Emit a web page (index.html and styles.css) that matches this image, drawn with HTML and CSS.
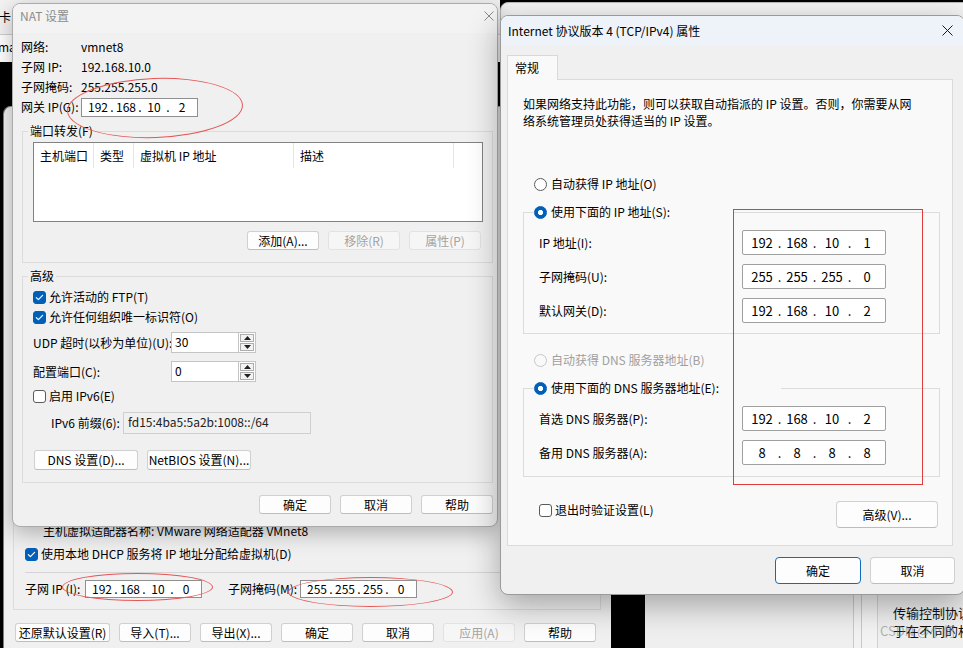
FILE: index.html
```html
<!DOCTYPE html>
<html lang="zh-CN">
<head>
<meta charset="utf-8">
<title>NAT 设置</title>
<link rel="stylesheet" href="styles.css">
</head>
<body>
<div class="desk">
  <div class="win back-top">
    <div class="bt-title">卡</div>
    <div class="bt-body">ma</div>
  </div>

  <div class="win vne">
    <div class="vne-group">
      <div class="vne-adapter">主机虚拟适配器名称: VMware 网络适配器 VMnet8</div>
      <div class="row-check vne-dhcp"><span class="cb on"><svg width="11" height="11" viewBox="0 0 11 11"><path d="M2.3 5.6 L4.4 7.6 L8.6 3.3" fill="none" stroke="#fff" stroke-width="1.2" stroke-linecap="round" stroke-linejoin="round"/></svg></span><span>使用本地 DHCP 服务将 IP 地址分配给虚拟机(D)</span></div>
      <div class="vne-sep"></div>
      <div class="vne-subnet">
        <span class="vne-l1">子网 IP (I):</span>
        <div class="ip ip-sm ip-vne"><span>192</span><i>.</i><span>168</span><i>.</i><span>10</span><i>.</i><span>0</span></div>
        <span class="vne-l2">子网掩码(M):</span>
        <div class="ip ip-sm ip-vne"><span>255</span><i>.</i><span>255</span><i>.</i><span>255</span><i>.</i><span>0</span></div>
      </div>
    </div>
    <div class="btn-row vne-buttons">
      <button class="btn w95">还原默认设置(R)</button>
      <button class="btn w72">导入(T)...</button>
      <button class="btn w72">导出(X)...</button>
      <button class="btn w72 extra">确定</button>
      <button class="btn w72">取消</button>
      <button class="btn w72 dis">应用(A)</button>
      <button class="btn w72">帮助</button>
    </div>
  </div>

  <div class="win eth-top"></div>

  <div class="win eth-bottom">
    <div class="eb-space"></div>
    <div class="eb-bar"></div>
    <div class="eb-gap"></div>
    <div class="eb-panel">
      <div>传输控制协议/Internet 协议。该协议是默认的</div>
      <div>于在不同的相互连接的网络上通信。</div>
    </div>
  </div>

  <div class="win nat">
    <div class="titlebar nat-title">
      <span>NAT 设置</span>
      <svg class="xicon" width="10" height="10" viewBox="0 0 10 10"><path d="M0.5 0.5 L9.5 9.5 M9.5 0.5 L0.5 9.5" stroke="#8a8a8a" stroke-width="1"/></svg>
    </div>
    <div class="nat-body">
      <div class="nat-info">
        <span>网络:</span><span>vmnet8</span>
        <span>子网 IP:</span><span>192.168.10.0</span>
        <span>子网掩码:</span><span>255.255.255.0</span>
        <span>网关 IP(G):</span>
        <div class="ip ip-sm ip-gw"><span>192</span><i>.</i><span>168</span><i>.</i><span>10</span><i>.</i><span>2</span></div>
      </div>

      <fieldset class="grp nat-pf">
        <legend>端口转发(F)</legend>
        <div class="pf-in">
          <div class="pf-list">
            <div class="pf-head"><span>主机端口</span><span>类型</span><span>虚拟机 IP 地址</span><span>描述</span><span></span></div>
          </div>
          <div class="btn-row pf-btns">
            <button class="btn w72">添加(A)...</button>
            <button class="btn w72 dis">移除(R)</button>
            <button class="btn w72 dis">属性(P)</button>
          </div>
        </div>
      </fieldset>

      <fieldset class="grp nat-adv">
        <legend>高级</legend>
        <div class="adv-in">
          <div class="row-check"><span class="cb on"><svg width="11" height="11" viewBox="0 0 11 11"><path d="M2.3 5.6 L4.4 7.6 L8.6 3.3" fill="none" stroke="#fff" stroke-width="1.2" stroke-linecap="round" stroke-linejoin="round"/></svg></span><span>允许活动的 FTP(T)</span></div>
          <div class="row-check adv-oui"><span class="cb on"><svg width="11" height="11" viewBox="0 0 11 11"><path d="M2.3 5.6 L4.4 7.6 L8.6 3.3" fill="none" stroke="#fff" stroke-width="1.2" stroke-linecap="round" stroke-linejoin="round"/></svg></span><span>允许任何组织唯一标识符(O)</span></div>
          <div class="adv-field adv-udp">
            <span class="adv-lbl">UDP 超时(以秒为单位)(U):</span>
            <div class="spin">
              <div class="spin-field">30</div>
              <div class="spin-btns">
                <span><svg width="7" height="4" viewBox="0 0 7 4"><path d="M0 4 L3.5 0 L7 4Z" fill="#222"/></svg></span>
                <span><svg width="7" height="4" viewBox="0 0 7 4"><path d="M0 0 L3.5 4 L7 0Z" fill="#222"/></svg></span>
              </div>
            </div>
          </div>
          <div class="adv-field adv-port">
            <span class="adv-lbl">配置端口(C):</span>
            <div class="spin">
              <div class="spin-field">0</div>
              <div class="spin-btns">
                <span><svg width="7" height="4" viewBox="0 0 7 4"><path d="M0 4 L3.5 0 L7 4Z" fill="#222"/></svg></span>
                <span><svg width="7" height="4" viewBox="0 0 7 4"><path d="M0 0 L3.5 4 L7 0Z" fill="#222"/></svg></span>
              </div>
            </div>
          </div>
          <div class="row-check adv-v6"><span class="cb"></span><span>启用 IPv6(E)</span></div>
          <div class="adv-prefix"><span>IPv6 前缀(6):</span><div class="prefix-box">fd15:4ba5:5a2b:1008::/64</div></div>
          <div class="btn-row adv-btns">
            <button class="btn w104 h20">DNS 设置(D)...</button>
            <button class="btn w104 h20">NetBIOS 设置(N)...</button>
          </div>
        </div>
      </fieldset>

      <div class="btn-row nat-foot">
        <button class="btn w72">确定</button>
        <button class="btn w72">取消</button>
        <button class="btn w72">帮助</button>
      </div>
    </div>
  </div>

  <div class="win ipv4">
    <div class="titlebar ip-title">
      <span>Internet 协议版本 4 (TCP/IPv4) 属性</span>
      <svg class="xicon" width="11" height="11" viewBox="0 0 11 11"><path d="M0.5 0.5 L10.5 10.5 M10.5 0.5 L0.5 10.5" stroke="#1a1a1a" stroke-width="1"/></svg>
    </div>
    <div class="ip-body">
      <div class="tabs"><div class="tab">常规</div></div>
      <div class="panel">
        <p class="intro">如果网络支持此功能，则可以获取自动指派的 IP 设置。否则，你需要从网<br>络系统管理员处获得适当的 IP 设置。</p>
        <div class="row-radio r-auto-ip"><span class="rb"></span><span>自动获得 IP 地址(O)</span></div>
        <fieldset class="grp g-ip">
          <legend class="lg-radio lg-ip"><span class="rb on"></span><span>使用下面的 IP 地址(S):</span></legend>
          <div class="grp-rows">
            <div class="ip-row"><span>IP 地址(I):</span><div class="ip ip-lg"><span>192</span><i>.</i><span>168</span><i>.</i><span>10</span><i>.</i><span>1</span></div></div>
            <div class="ip-row"><span>子网掩码(U):</span><div class="ip ip-lg"><span>255</span><i>.</i><span>255</span><i>.</i><span>255</span><i>.</i><span>0</span></div></div>
            <div class="ip-row"><span>默认网关(D):</span><div class="ip ip-lg"><span>192</span><i>.</i><span>168</span><i>.</i><span>10</span><i>.</i><span>2</span></div></div>
          </div>
        </fieldset>
        <div class="row-radio r-auto-dns"><span class="rb dis"></span><span>自动获得 DNS 服务器地址(B)</span></div>
        <fieldset class="grp g-dns">
          <legend class="lg-radio lg-dns"><span class="rb on"></span><span>使用下面的 DNS 服务器地址(E):</span></legend>
          <div class="grp-rows">
            <div class="ip-row"><span>首选 DNS 服务器(P):</span><div class="ip ip-lg"><span>192</span><i>.</i><span>168</span><i>.</i><span>10</span><i>.</i><span>2</span></div></div>
            <div class="ip-row"><span>备用 DNS 服务器(A):</span><div class="ip ip-lg"><span>8</span><i>.</i><span>8</span><i>.</i><span>8</span><i>.</i><span>8</span></div></div>
          </div>
        </fieldset>
        <div class="panel-foot">
          <div class="row-check"><span class="cb"></span><span>退出时验证设置(L)</span></div>
          <button class="btn btn-adv">高级(V)...</button>
        </div>
      </div>
      <div class="btn-row ip-foot">
        <button class="btn big def w86">确定</button>
        <button class="btn big w85">取消</button>
      </div>
    </div>
  </div>

  <div class="win mark-rect"></div>
  <div class="win mark-ell e1"></div>
  <div class="win mark-ell e2"></div>
  <div class="win mark-ell e3"></div>
  <div class="win wm">CSDN @小何</div>
</div>
</body>
</html>
```

FILE: styles.css
```css
* { box-sizing: border-box; }
html, body { margin: 0; padding: 0; }
body {
  width: 963px; height: 648px; overflow: hidden; background: #000;
  font-family: "Noto Sans CJK SC", "Noto Sans", sans-serif;
  font-size: 12px; line-height: 16px; color: #000;
}
.desk { position: relative; width: 963px; height: 648px; overflow: hidden; white-space: nowrap; }
.win { position: absolute; }

/* background windows */
.back-top { left: 0; top: 0; width: 500px; height: 62px; }
.bt-title { height: 35px; background: #f3f3f3; border-bottom: 1px solid #cfcfcf; padding-top: 9px; text-indent: -1px; }
.bt-body { height: 27px; background: #fff; padding-top: 4px; text-indent: -2px; }

.vne {
  left: 3px; top: 106px; width: 608px; height: 542px; background: #f0f0f0;
  border-left: 1px solid #7d7d7d; border-top: 1px solid #9a9a9a; border-radius: 8px 0 0 0;
  display: flex; flex-direction: column;
}
.vne-group {
  flex: 1; margin: 0 10px 0 9px; border: 1px solid #dcdcdc; border-top: none;
  display: flex; flex-direction: column; justify-content: flex-end; padding: 0 0 11px 11px;
}
.vne-adapter { margin-left: 18px; margin-bottom: 7px; }
.vne-dhcp { margin-bottom: 10px; }
.vne-sep { height: 1px; background: #d5d5d5; margin: 0 10px 7px 0; }
.vne-subnet { display: flex; align-items: center; height: 18px; }
.vne-l1 { width: 60px; }
.vne-l2 { width: 72px; margin-left: 26px; }
.vne-buttons { margin-top: 13px; padding: 0 0 6px 11px; }
.extra { margin-left: 4px; }

.eth-top { left: 500px; top: 2px; width: 480px; height: 200px; background: #f3f3f3; border: 1px solid #b8b8b8; border-radius: 8px; }

.eth-bottom { left: 645px; top: 420px; width: 318px; height: 228px; background: #efefef; display: flex; }
.eb-space { width: 208px; }
.eb-bar { width: 9px; border-left: 1px solid #c9c9c9; border-right: 1px solid #c9c9c9; background: #f2f2f2; }
.eb-gap { width: 15px; background: #f3f3f3; }
.eb-panel {
  flex: 1; border-left: 1px solid #d2d2d2; padding: 0 0 8px 15px; display: flex; flex-direction: column;
  justify-content: flex-end; line-height: 18px; overflow: hidden; font-size: 13px; color: #111;
}

/* common controls */
.titlebar { display: flex; align-items: center; justify-content: space-between; }
.xicon { flex: none; }
.btn-row { display: flex; gap: 9px; }
button.btn {
  font: inherit; color: #000; margin: 0; padding: 0; -webkit-appearance: none; appearance: none;
  height: 19px; line-height: 17px; text-align: center; background: #fdfdfd;
  border: 1px solid #d0d0d0; border-bottom-color: #bdbdbd; border-radius: 3px;
}
button.btn.dis { color: #a3a3a3; background: #f6f6f6; border-color: #e2e2e2; }
button.btn.h20 { height: 20px; line-height: 18px; }
button.btn.big { height: 27px; line-height: 25px; border-radius: 4px; }
button.btn.def { border-color: #0f6cbd; }
.w72 { width: 72px; }
.w85 { width: 85px; }
.w86 { width: 86px; }
.w95 { width: 95px; }
.w104 { width: 104px; }

.row-check { display: flex; align-items: center; gap: 3px; height: 16px; }
.cb {
  width: 13px; height: 13px; flex: none; border: 1px solid #5a5a5a; border-radius: 3px; background: #fff;
  display: flex; align-items: center; justify-content: center;
}
.cb.on { background: #005fb8; border-color: #005fb8; }
.rb { width: 13px; height: 13px; flex: none; border-radius: 50%; border: 1px solid #5c5c5c; background: #fff; }
.rb.on { border-color: #005fb8; background: radial-gradient(circle, #fff 0 2.3px, #005fb8 2.9px); }
.rb.dis { border-color: #c7c7c7; background: #f9f9f9; }

.ip { display: flex; align-items: center; background: #fff; border: 1px solid #8f8f8f; }
.ip span { text-align: center; flex: none; }
.ip i { font-style: normal; text-align: center; flex: none; }
.ip-sm { width: 117px; padding-left: 5px; }
.ip-sm span { width: 22px; }
.ip-sm i { width: 6px; }
.ip-gw { height: 19px; }
.ip-vne { height: 18px; }
.ip-lg { width: 144px; height: 25px; padding-left: 5px; font-size: 13px; border-color: #a0a0a0; border-radius: 2px; }
.ip-lg span { width: 28px; }
.ip-lg i { width: 7px; }

.grp { margin: 0; padding: 0; border: 1px solid #dcdcdc; min-width: 0; }
.grp legend { padding: 0 2px; margin-left: 5px; line-height: 14px; height: 14px; }

/* NAT dialog */
.nat {
  left: 12px; top: 3px; width: 486px; height: 524px; background: #f0f0f0;
  border: 1px solid #ababab; border-radius: 8px; box-shadow: 0 6px 22px rgba(0,0,0,.28); overflow: hidden;
}
.nat-title { height: 29px; background: #f3f3f3; padding: 0 3px 5px 7px; color: #8c8c8c; }
.nat-body { padding: 4px 4px 0 8px; }
.nat-info { display: grid; grid-template-columns: 60px 1fr; grid-auto-rows: 20px; align-items: center; }
.nat-pf { margin: 7px 0 0 1px; }
.pf-in { padding: 4px 9px 12px 10px; }
.pf-list { height: 80px; background: #fff; border: 1px solid #828282; }
.pf-head { display: grid; grid-template-columns: 60px 40px 160px 160px 1fr; height: 25px; }
.pf-head span { border-right: 1px solid #e5e5e5; padding-left: 6px; line-height: 25px; }
.pf-head span:last-child { border-right: none; }
.pf-btns { justify-content: flex-end; margin: 9px 2px 0 0; }

.nat-adv { margin: 6px 0 0 1px; }
.adv-in { padding: 6px 9px 12px 10px; display: flex; flex-direction: column; }
.adv-oui { margin-top: 4px; }
.adv-field { display: flex; align-items: center; height: 21px; }
.adv-udp { margin-top: 7px; }
.adv-port { margin-top: 8px; }
.adv-lbl { width: 138px; }
.spin { display: flex; height: 21px; }
.spin-field { width: 67px; height: 21px; background: #fff; border: 1px solid #c4c4c4; border-right: none; padding-left: 3px; line-height: 17px; }
.spin-btns { width: 18px; height: 21px; border: 1px solid #c4c4c4; background: #fff; display: flex; flex-direction: column; gap: 1px; padding: 1px; }
.spin-btns span { flex: 1; border: 1px solid #adadad; background: #f3f3f3; display: flex; align-items: center; justify-content: center; }
.adv-v6 { margin-top: 6px; }
.adv-prefix { display: flex; align-items: center; margin-top: 8px; height: 22px; padding-left: 18px; }
.adv-prefix > span { width: 72px; }
.prefix-box { width: 188px; height: 22px; background: #f0f0f0; border: 1px solid #cfcfcf; padding-left: 4px; line-height: 18px; color: #222; }
.adv-btns { margin-top: 16px; padding-left: 1px; }
.nat-foot { justify-content: flex-end; margin-top: 12px; }

/* IPv4 dialog */
.ipv4 {
  left: 500px; top: 15px; width: 465px; height: 580px; background: #f0f0f0;
  border: 1px solid #9a9a9a; border-radius: 8px; box-shadow: 0 10px 32px rgba(0,0,0,.32); overflow: hidden;
}
.ip-title { height: 29px; background: #eef3f9; padding: 0 11px 0 7px; }
.ip-body { padding: 10px 0 0 6px; }
.tabs { display: flex; position: relative; z-index: 1; }
.tab { width: 51px; height: 25px; margin-bottom: -1px; background: #f9f9f9; border: 1px solid #d9d9d9; border-bottom: none; padding-left: 7px; line-height: 23px; }
.panel { width: 446px; height: 467px; background: #f9f9f9; border: 1px solid #dadada; padding: 15px 12px 17px 15px; }
.intro { margin: 0; line-height: 17px; }
.row-radio { display: flex; align-items: center; gap: 4px; height: 16px; margin-left: 11px; }
.r-auto-ip { margin-top: 47px; }
.g-ip { margin-top: 12px; }
.grp legend.lg-radio { display: flex; align-items: center; gap: 4px; padding: 0; margin-left: 10px; height: 16px; line-height: 16px; }
.lg-ip { width: 200px; }
.lg-dns { width: 247px; }
.grp-rows { padding: 10px 0 10px 15px; display: flex; flex-direction: column; gap: 9px; }
.g-dns .grp-rows { padding-bottom: 11px; }
.ip-row { display: flex; align-items: center; height: 25px; }
.ip-row > span { width: 203px; }
.r-auto-dns { margin-top: 18px; color: #a0a0a0; }
.g-dns { margin-top: 12px; }
.panel-foot { display: flex; justify-content: space-between; align-items: flex-start; margin-top: 24px; padding-left: 16px; }
.panel-foot .row-check { margin-top: 1px; }
button.btn.btn-adv { width: 102px; height: 27px; line-height: 25px; margin-right: 2px; border-radius: 4px; }
.ip-foot { justify-content: flex-end; margin-top: 11px; padding-right: 9px; }

/* annotations */
.mark-rect { left: 733px; top: 209px; width: 190px; height: 276px; border: 1px solid #e23b3b; }
.mark-ell { border: 1px solid #e65656; border-radius: 50%; }
.e1 { left: 67px; top: 78px; width: 176px; height: 60px; transform: rotate(-2deg); }
.e2 { left: 62px; top: 573px; width: 151px; height: 28px; }
.e3 { left: 288px; top: 577px; width: 165px; height: 30px; }
.wm { left: 880px; top: 623px; color: rgba(110,110,110,.5); font-size: 13px; line-height: 16px; }
```
